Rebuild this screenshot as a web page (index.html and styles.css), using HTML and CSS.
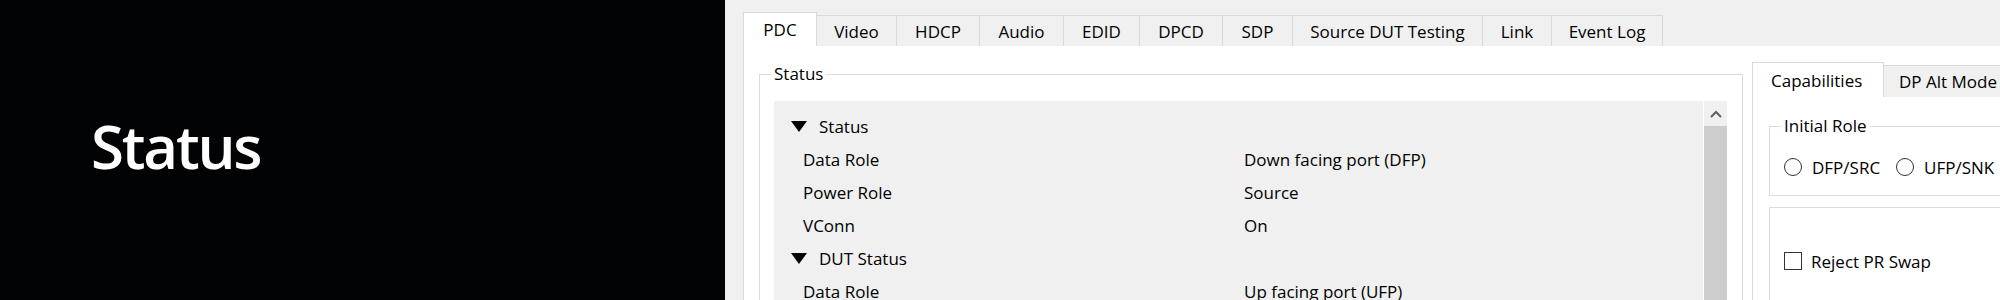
FILE: index.html
```html
<!DOCTYPE html>
<html>
<head>
<meta charset="utf-8">
<link rel="stylesheet" href="styles.css">
</head>
<body>
<div class="screen">
  <section class="video">
    <h1 class="video-title">Status</h1>
  </section>
  <main class="app">
    <nav class="tabbar">
      <div class="tab active w-pdc">PDC</div>
      <div class="tab w-video">Video</div>
      <div class="tab w-hdcp">HDCP</div>
      <div class="tab w-audio">Audio</div>
      <div class="tab w-edid">EDID</div>
      <div class="tab w-dpcd">DPCD</div>
      <div class="tab w-sdp">SDP</div>
      <div class="tab w-src">Source DUT Testing</div>
      <div class="tab w-link">Link</div>
      <div class="tab w-log">Event Log</div>
    </nav>
    <div class="pane">
      <fieldset class="group status-group">
        <legend>Status</legend>
        <div class="tree-wrap">
          <div class="tree">
            <div class="row head">
              <svg class="caret" width="16" height="11" viewBox="0 0 16 11"><polygon points="0,0 16,0 8,11" fill="#000"/></svg>
              <span class="head-name">Status</span>
            </div>
            <div class="row"><span class="name">Data Role</span><span class="value">Down facing port (DFP)</span></div>
            <div class="row"><span class="name">Power Role</span><span class="value">Source</span></div>
            <div class="row"><span class="name">VConn</span><span class="value">On</span></div>
            <div class="row head">
              <svg class="caret" width="16" height="11" viewBox="0 0 16 11"><polygon points="0,0 16,0 8,11" fill="#000"/></svg>
              <span class="head-name">DUT Status</span>
            </div>
            <div class="row"><span class="name">Data Role</span><span class="value">Up facing port (UFP)</span></div>
          </div>
          <div class="scrollbar">
            <div class="sb-btn">
              <svg width="12" height="8" viewBox="0 0 12 8"><polyline points="1,7 6,2 11,7" fill="none" stroke="#606060" stroke-width="2"/></svg>
            </div>
            <div class="sb-thumb"></div>
          </div>
        </div>
      </fieldset>
      <div class="subtabs">
        <div class="subtabbar">
          <div class="tab active w-cap">Capabilities</div>
          <div class="tab w-alt">DP Alt Mode</div>
        </div>
        <div class="subpane">
          <fieldset class="group role-group">
            <legend>Initial Role</legend>
            <div class="radios">
              <label class="radio"><span class="circle"></span>DFP/SRC</label>
              <label class="radio"><span class="circle"></span>UFP/SNK</label>
            </div>
          </fieldset>
          <fieldset class="group swap-group">
            <label class="check"><span class="box"></span>Reject PR Swap</label>
          </fieldset>
        </div>
      </div>
    </div>
  </main>
</div>
</body>
</html>
```

FILE: styles.css
```css
* { box-sizing: border-box; }

html, body {
  margin: 0;
  padding: 0;
  width: 2000px;
  height: 300px;
  overflow: hidden;
}

body {
  font-family: "Open Sans", "Noto Sans", sans-serif;
  font-size: 17px;
  color: #000;
}

.screen {
  display: flex;
  width: 2000px;
  height: 300px;
}

/* left video panel */
.video {
  width: 725px;
  flex: none;
  height: 300px;
  background: #020305;
  padding: 116px 0 0 91px;
}

.video-title {
  margin: 0;
  font-family: "Open Sans", sans-serif;
  font-weight: 600;
  font-size: 60px;
  line-height: 60px;
  letter-spacing: -2.2px;
  color: #ffffff;
  width: max-content;
}

/* application window */
.app {
  flex: 1;
  min-width: 0;
  background: #f0f0f0;
  padding: 12px 0 0 18px;
  display: flex;
  flex-direction: column;
  overflow: hidden;
}

.tabbar {
  display: flex;
  align-items: flex-end;
  height: 34px;
  flex: none;
}

.tab {
  height: 31px;
  border: 1px solid #d9d9d9;
  border-bottom: none;
  background: #f0f0f0;
  display: flex;
  align-items: center;
  justify-content: center;
  margin-left: -1px;
  white-space: nowrap;
  flex: none;
  position: relative;
}

.tab.active {
  height: 34px;
  background: #ffffff;
  z-index: 1;
}

.tabbar .tab:first-child { margin-left: 0; }

.w-pdc { width: 74px; }
.w-video { width: 81px; }
.w-hdcp { width: 84px; }
.w-audio { width: 85px; }
.w-edid { width: 77px; }
.w-dpcd { width: 84px; }
.w-sdp { width: 71px; }
.w-src { width: 191px; }
.w-link { width: 70px; }
.w-log { width: 112px; }

.pane {
  flex: 1;
  background: #ffffff;
  border-left: 1px solid #d9d9d9;
  padding: 16px 0 0 15px;
  display: flex;
  align-items: flex-start;
  min-width: 0;
}

/* group boxes */
.group {
  margin: 0;
  min-width: 0;
  border: 1px solid #dcdcdc;
}

.group legend {
  margin-left: -3px;
  padding: 0 3px;
  line-height: 24px;
  height: 24px;
}

.status-group {
  width: 984px;
  flex: none;
  padding: 15px 15px 0 14px;
  height: 400px;
}

.tree-wrap {
  display: flex;
  height: 300px;
}

.tree {
  flex: 1;
  background: #f0f0f0;
  padding-top: 9px;
}

.row {
  display: flex;
  align-items: center;
  height: 33px;
  white-space: nowrap;
}

.row .name {
  width: 470px;
  padding-left: 29px;
  flex: none;
}

.row.head {
  padding-left: 17px;
}

.caret {
  flex: none;
  display: block;
  margin-right: 12px;
}

.scrollbar {
  width: 23px;
  margin-left: 1px;
  flex: none;
  display: flex;
  flex-direction: column;
  background: #f0f0f0;
}

.sb-btn {
  height: 25px;
  display: flex;
  align-items: center;
  justify-content: center;
  padding-top: 1px;
}

.sb-btn svg { display: block; }

.sb-thumb {
  flex: 1;
  background: #cdcdcd;
}

/* right sub tab widget */
.subtabs {
  margin-left: 9px;
  width: 420px;
  flex: none;
  display: flex;
  flex-direction: column;
}

.subtabbar {
  display: flex;
  align-items: flex-end;
  height: 35px;
}

.subtabbar .tab { height: 32px; justify-content: flex-start; padding-left: 15px; }
.subtabbar .tab.active { height: 35px; padding-left: 18px; }
.subtabbar .tab:first-child { margin-left: 0; }

.w-cap { width: 132px; }
.w-alt { width: 220px; }

.subpane {
  background: #ffffff;
  border-left: 1px solid #d9d9d9;
  padding: 17px 0 0 16px;
  height: 260px;
}

.role-group {
  width: 400px;
  padding: 17px 0 16px 14px;
}

.radios {
  display: flex;
  align-items: center;
  height: 24px;
}

.radio {
  display: flex;
  align-items: center;
  margin-right: 16px;
}

.circle {
  width: 18px;
  height: 18px;
  border: 1px solid #333333;
  border-radius: 50%;
  margin-right: 10px;
  background: #ffffff;
}

.swap-group {
  margin-top: 11px;
  width: 400px;
  height: 200px;
  padding: 41px 0 0 14px;
}

.check {
  display: flex;
  align-items: center;
  height: 24px;
}

.box {
  width: 18px;
  height: 18px;
  border: 1px solid #333333;
  background: #ffffff;
  margin-right: 9px;
}
```
